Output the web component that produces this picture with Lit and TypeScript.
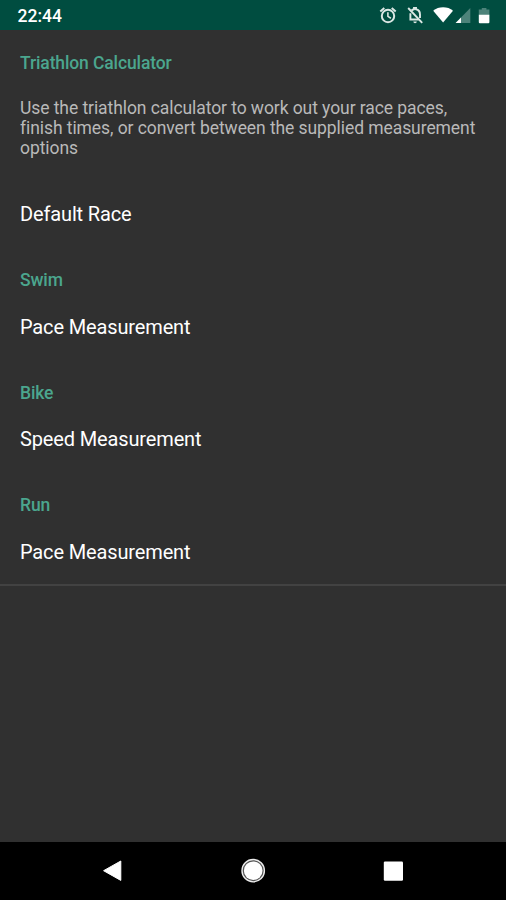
import { LitElement, html, css } from "lit";
import { customElement } from "lit/decorators.js";

interface Section {
  title: string;
  summary?: string;
  item: string;
}

const SECTIONS: Section[] = [
  {
    title: "Triathlon Calculator",
    summary:
      "Use the triathlon calculator to work out your race paces, finish times, or convert between the supplied measurement options",
    item: "Default Race",
  },
  { title: "Swim", item: "Pace Measurement" },
  { title: "Bike", item: "Speed Measurement" },
  { title: "Run", item: "Pace Measurement" },
];

@customElement("status-bar")
export class StatusBar extends LitElement {
  static styles = css`
    :host {
      display: flex;
      align-items: center;
      justify-content: space-between;
      height: 30px;
      padding-left: 17.5px;
      background: #004d40;
      color: #fff;
      flex: none;
    }
    .time {
      font-size: 17.5px;
      font-weight: 500;
      line-height: 20px;
      padding-top: 2px;
    }
    .icons {
      display: block;
      width: 136px;
      height: 30px;
    }
  `;

  render() {
    return html`
      <span class="time">22:44</span>
      <svg class="icons" viewBox="0 0 136 30">
        <g fill="none" stroke="#dbe7e4" stroke-width="2">
          <circle cx="18" cy="16" r="6.2" />
          <path d="M10.3 11.5l4-3.4M25.7 11.5l-4-3.400" />
          <path d="M17.9 12.2v4.200l3 1.900" stroke-width="1.600" />
        </g>
        <g fill="none" stroke="#dbe7e4" stroke-width="1.900">
          <path d="M41.500 10.500c1-.8 1.600-1 2.500-1.200V8h2v1.300c2.800.6 4 2.700 4 5.200v3.500M40.400 13.200v6.300h8.300" />
          <path d="M38.200 8l14 14.800" />
        </g>
        <path d="M43.300 21.500h3.500a1.750 1.750 0 0 1-3.500 0z" fill="#dbe7e4" />
        <path d="M63.200 10.700C68.500 6.200 77.700 6.200 83 10.700L73.100 22.500z" fill="#fff" />
        <path d="M100.300 8v15H85.600z" fill="#4d837a" />
        <path d="M91 17.500V23h-5.400z" fill="#fff" />
        <path d="M108.800 9.500h3V8h4.600v1.500h3V15h-10.600z" fill="#4d837a" />
        <path d="M108.800 14.800h10.600v7.400a1 1 0 0 1-1 1h-8.600a1 1 0 0 1-1-1z" fill="#fff" />
      </svg>
    `;
  }
}

@customElement("preference-section")
export class PreferenceSection extends LitElement {
  static properties = { section: { attribute: false } };
  declare section: Section;

  static styles = css`
    :host {
      display: block;
    }
    .title {
      height: 20px;
      padding: 24px 20px 3.5px;
      font-size: 17.5px;
      font-weight: 500;
      line-height: 20px;
      letter-spacing: -0.12px;
      color: #4ba68e;
    }
    .summary {
      margin: 0;
      padding: 21px 20px 23.5px;
      font-size: 17.5px;
      line-height: 20px;
      letter-spacing: -0.075px;
      color: #b9b9b9;
    }
    .item {
      height: 65px;
      padding: 0 20px;
      font-size: 20px;
      line-height: 66.500px;
      letter-spacing: -0.14px;
      color: #fff;
    }
  `;

  render() {
    const { title, summary, item } = this.section;
    return html`
      <div class="title">${title}</div>
      ${summary ? html`<p class="summary">${summary}</p>` : null}
      <div class="item">${item}</div>
    `;
  }
}

@customElement("navigation-bar")
export class NavigationBar extends LitElement {
  static styles = css`
    :host {
      display: block;
      flex: none;
      height: 58px;
      background: #000;
    }
    .keys {
      display: block;
      width: 100%;
      height: 58px;
    }
  `;

  render() {
    return html`
      <svg class="keys" viewBox="0 0 506 58">
        <path d="M103.600 28.700L120.800 19v19.400z" fill="#fff" stroke="#fff" stroke-width="1" stroke-linejoin="round" />
        <circle cx="253.200" cy="28.700" r="11.200" fill="#555" stroke="#ededed" stroke-width="1.400" />
        <circle cx="253.200" cy="28.700" r="9.300" fill="#fff" />
        <rect x="383.800" y="19.500" width="19.200" height="19.200" rx="1.200" fill="#fff" />
      </svg>
    `;
  }
}

@customElement("app-root")
export class AppRoot extends LitElement {
  static styles = css`
    :host {
      display: flex;
      flex-direction: column;
      height: 900px;
      background: #303030;
      font-family: Roboto, "Liberation Sans", sans-serif;
      overflow: hidden;
    }
    .list {
      flex: 1;
      margin-top: -1px;
    }
    .sections {
      border-bottom: 2px solid #424242;
    }
  `;

  render() {
    return html`
      <status-bar></status-bar>
      <main class="list">
        <div class="sections">
          ${SECTIONS.map((s) => html`<preference-section .section=${s}></preference-section>`)}
        </div>
      </main>
      <navigation-bar></navigation-bar>
    `;
  }
}
